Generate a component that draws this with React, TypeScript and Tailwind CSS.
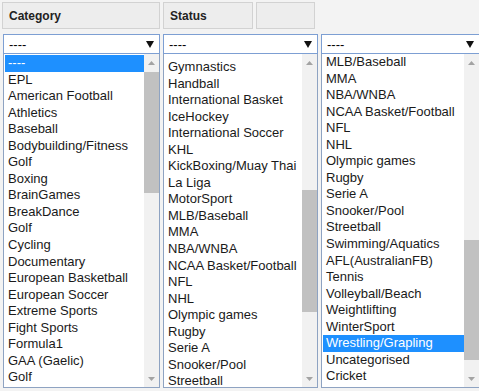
import React from "react";

const list1 = [
  "----", "EPL", "American Football", "Athletics", "Baseball", "Bodybuilding/Fitness", "Golf", "Boxing",
  "BrainGames", "BreakDance", "Golf", "Cycling", "Documentary", "European Basketball", "European Soccer",
  "Extreme Sports", "Fight Sports", "Formula1", "GAA (Gaelic)", "Golf",
];

const list2 = [
  "Gymnastics", "Handball", "International Basket", "IceHockey", "International Soccer", "KHL",
  "KickBoxing/Muay Thai", "La Liga", "MotorSport", "MLB/Baseball", "MMA", "NBA/WNBA",
  "NCAA Basket/Football", "NFL", "NHL", "Olympic games", "Rugby", "Serie A", "Snooker/Pool", "Streetball",
];

const list3 = [
  "MLB/Baseball", "MMA", "NBA/WNBA", "NCAA Basket/Football", "NFL", "NHL", "Olympic games", "Rugby",
  "Serie A", "Snooker/Pool", "Streetball", "Swimming/Aquatics", "AFL(AustralianFB)", "Tennis",
  "Volleyball/Beach", "Weightlifting", "WinterSport", "Wrestling/Grapling", "Uncategorised", "Cricket",
];

interface ScrollbarProps {
  before: number;
  thumb: number;
}

const Scrollbar = ({ before, thumb }: ScrollbarProps) => (
  <div className="flex w-[15px] shrink-0 flex-col bg-[#f1f1f1]">
    <div className="flex h-[17px] items-center justify-center">
      <svg width="7" height="4" viewBox="0 0 7 4">
        <path d="M0 4 L3.5 0 L7 4 Z" fill="#a3a3a3" />
      </svg>
    </div>
    <div style={{ height: before }} />
    <div className="bg-[#c1c1c1]" style={{ height: thumb }} />
    <div className="flex-1" />
    <div className="flex h-[17px] items-center justify-center">
      <svg width="7" height="4" viewBox="0 0 7 4">
        <path d="M0 0 L7 0 L3.5 4 Z" fill="#a3a3a3" />
      </svg>
    </div>
  </div>
);

interface ColumnProps {
  width: number;
  items: string[];
  selected: number;
  offset: number;
  before: number;
  thumb: number;
}

const Column = ({ width, items, selected, offset, before, thumb }: ColumnProps) => (
  <div className="flex shrink-0 flex-col" style={{ width }}>
    <div className="flex h-[20px] items-center justify-between border border-[#7d9fd3] bg-white pl-[5px] pr-[5px]">
      <span className="text-[13px] leading-none text-black">----</span>
      <svg width="8" height="7" viewBox="0 0 8 7">
        <path d="M0 0 L8 0 L4 7 Z" fill="#111" />
      </svg>
    </div>
    <div className="flex h-[334px] border border-t-0 border-[#8ea3c2] bg-white">
      <div className="flex-1 overflow-hidden pl-px pt-px">
        <div style={{ marginTop: offset }}>
          {items.map((it, i) => (
            <div
              key={i}
              className={
                "h-[16.55px] whitespace-nowrap pl-[3px] text-[13px] leading-[16.55px] " +
                (i === selected ? "bg-[#1e90ff] text-white" : "text-[#1a1a1a]")
              }
            >
              {it}
            </div>
          ))}
        </div>
      </div>
      <Scrollbar before={before} thumb={thumb} />
    </div>
  </div>
);

export default function App() {
  return (
    <div
      className="h-[391px] w-[479px] overflow-hidden bg-[#f3f3f3]"
      style={{ fontFamily: '"Liberation Sans", Arial, sans-serif' }}
    >
      <div className="flex gap-[3px] pl-[2px] pt-[2px]">
        <div className="flex h-[27px] w-[158px] items-center border border-[#d2d2d2] bg-[#ededed] pl-[6px] pt-px text-[12px] font-bold text-[#222]">
          Category
        </div>
        <div className="flex h-[27px] w-[90px] items-center border border-[#d2d2d2] bg-[#ededed] pl-[6px] pt-px text-[12px] font-bold text-[#222]">
          Status
        </div>
        <div className="h-[27px] w-[59px] border border-[#d2d2d2] bg-[#ededed]" />
      </div>
      <div className="flex gap-[3px] pl-[3px] pt-[5px]">
        <Column width={157} items={list1} selected={0} offset={0} before={1} thumb={121} />
        <Column width={155} items={list2} selected={-1} offset={4} before={119} thumb={122} />
        <Column width={159} items={list3} selected={17} offset={-1} before={169} thumb={120} />
      </div>
    </div>
  );
}
